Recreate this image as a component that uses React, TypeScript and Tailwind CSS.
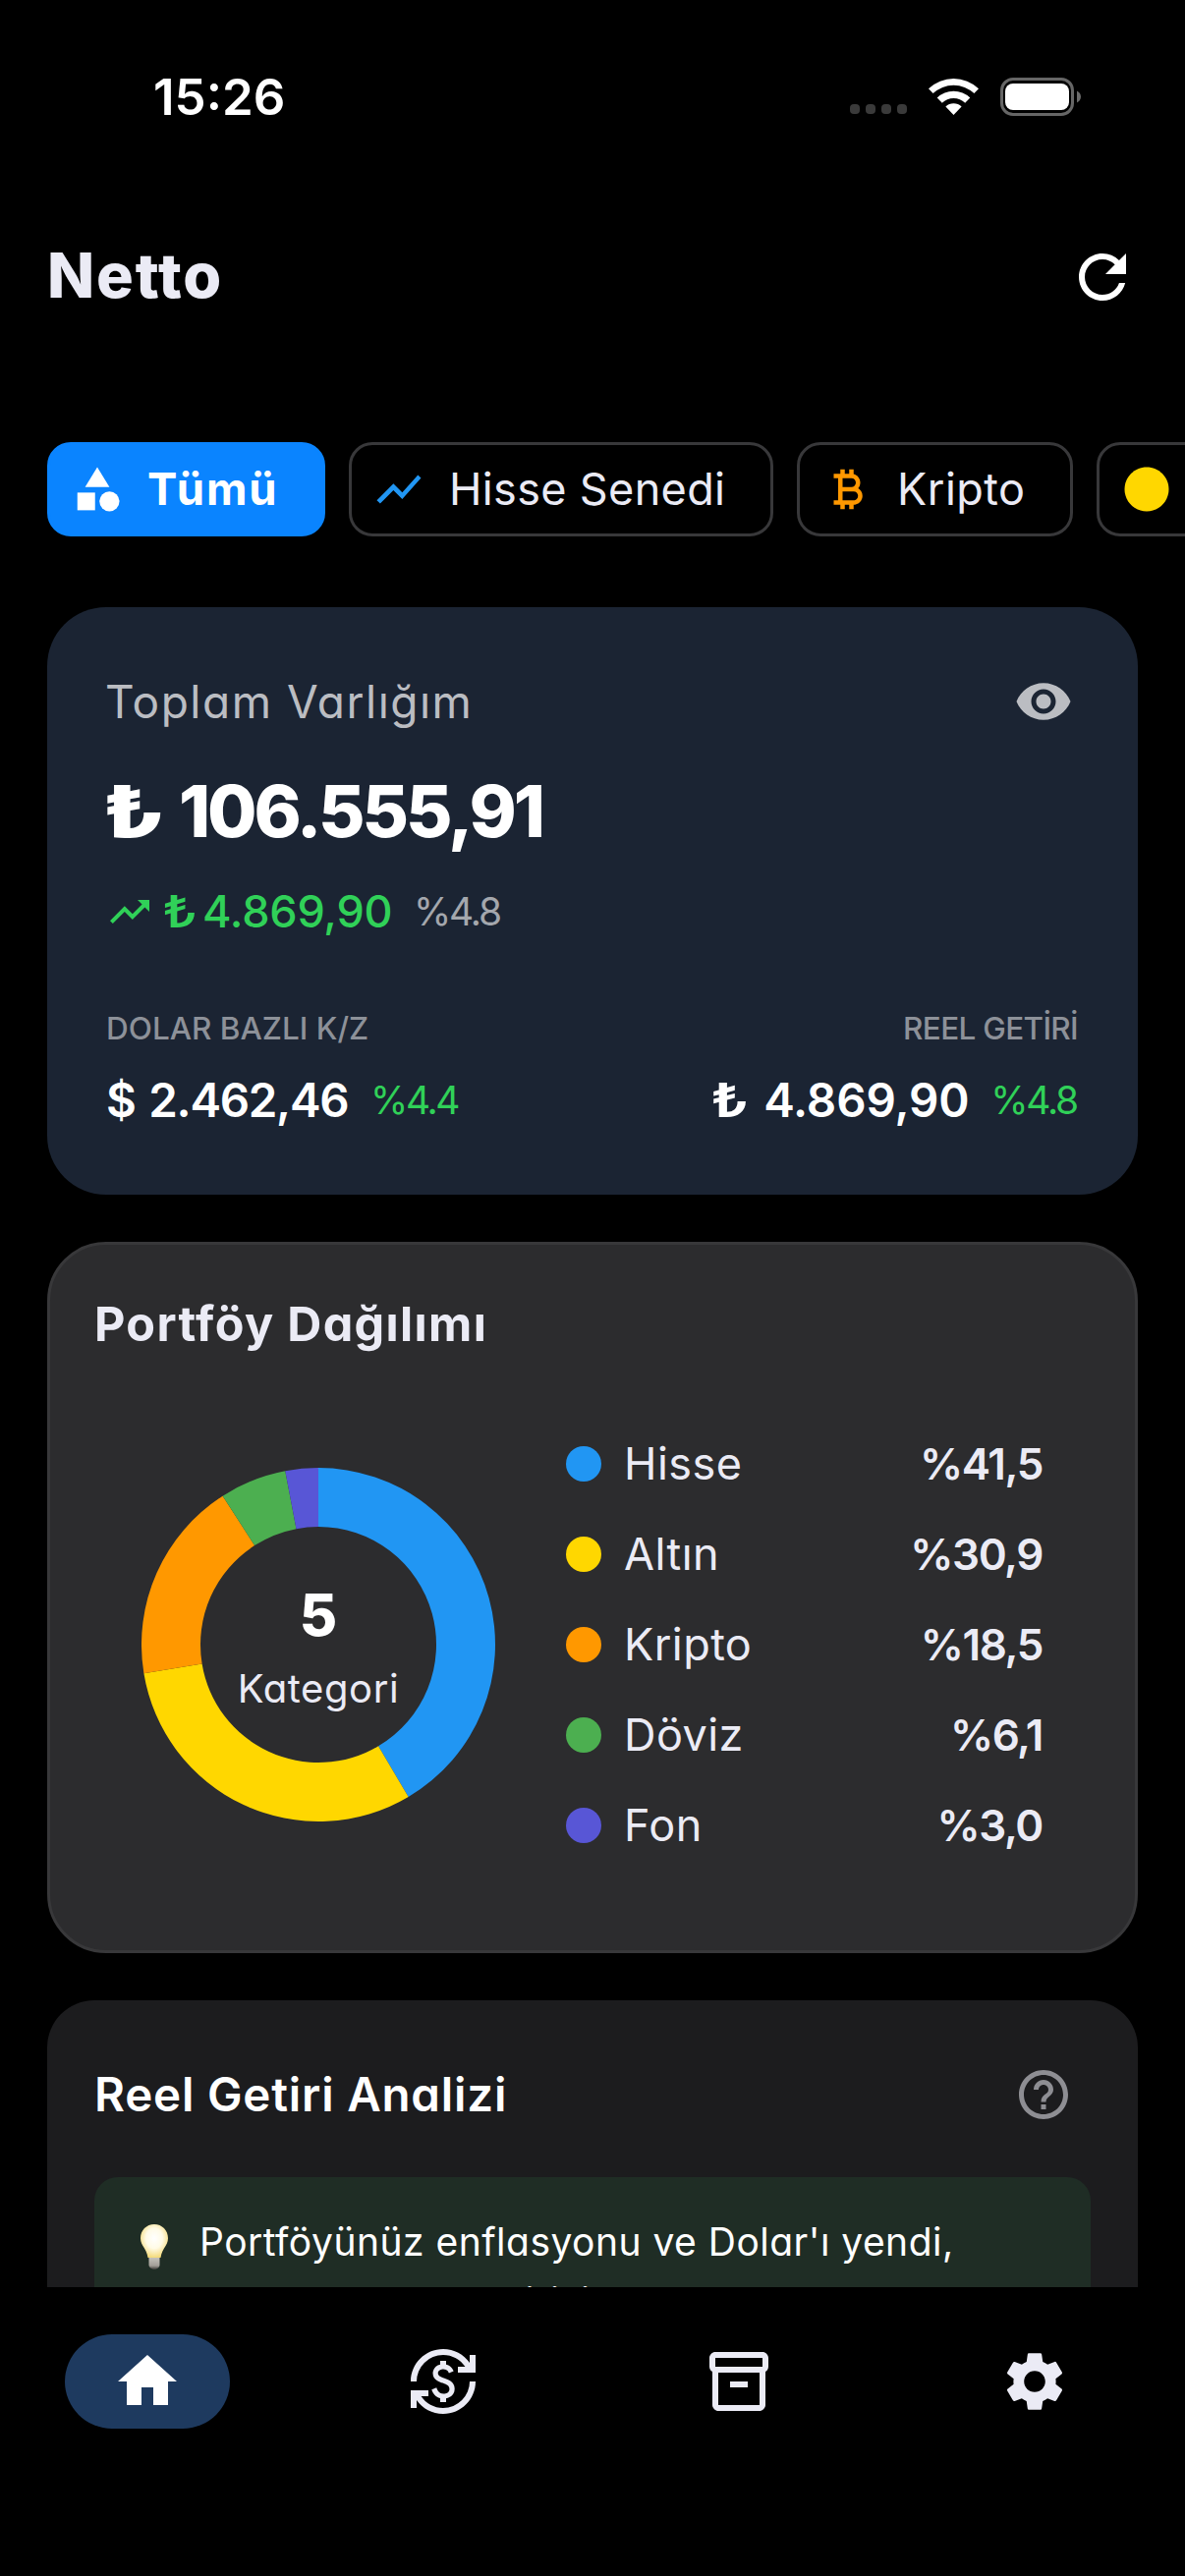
import React, { useState } from "react";
import type { IconType } from "react-icons";
import {
  MdCategory,
  MdCircle,
  MdCurrencyBitcoin,
  MdCurrencyExchange,
  MdHelpOutline,
  MdHome,
  MdOutlineInventory2,
  MdRefresh,
  MdSettings,
  MdShowChart,
  MdTrendingUp,
  MdVisibility,
} from "react-icons/md";
import clsx from "clsx";

interface Filter {
  label: string;
  icon: IconType;
  iconClass: string;
  width: string;
  text: string;
}

const filters: Filter[] = [
  { label: "Tümü", icon: MdCategory, iconClass: "text-white", width: "w-[283px]", text: "text-[45.5px] tracking-[1.8px]" },
  { label: "Hisse Senedi", icon: MdShowChart, iconClass: "text-[#2196f3]", width: "w-[432px]", text: "text-[45px] tracking-[0.35px]" },
  { label: "Kripto", icon: MdCurrencyBitcoin, iconClass: "text-[#ff9800]", width: "w-[281px]", text: "text-[45px] tracking-[0.5px]" },
  { label: "Altın", icon: MdCircle, iconClass: "text-[#ffd700]", width: "w-[250px]", text: "text-[45px] tracking-[0.5px]" },
];

interface Category {
  name: string;
  value: number;
  color: string;
  dot: string;
}

const categories: Category[] = [
  { name: "Hisse", value: 41.5, color: "#2196f3", dot: "bg-[#2196f3]" },
  { name: "Altın", value: 30.9, color: "#ffd700", dot: "bg-[#ffd700]" },
  { name: "Kripto", value: 18.5, color: "#ff9800", dot: "bg-[#ff9800]" },
  { name: "Döviz", value: 6.1, color: "#4caf50", dot: "bg-[#4caf50]" },
  { name: "Fon", value: 3.0, color: "#5856d6", dot: "bg-[#5856d6]" },
];

const navItems: IconType[] = [
  MdHome,
  MdCurrencyExchange,
  MdOutlineInventory2,
  MdSettings,
];

const formatPercent = (value: number): string =>
  `%${value.toFixed(1).replace(".", ",")}`;

const StatusBar: React.FC = () => (
  <div className="flex h-[196px] shrink-0 items-center justify-between pl-[156px] pr-[106px]">
    <span className="text-[51px] font-semibold leading-none text-white">
      15:26
    </span>
    <div className="flex items-center gap-[22px]">
      <div className="mt-[26px] flex gap-[6px]">
        {[0, 1, 2, 3].map((i) => (
          <span key={i} className="h-[10px] w-[10px] rounded-[4px] bg-[#3a3a3a]" />
        ))}
      </div>
      <svg width="51" height="37" viewBox="0 0 51 37" fill="#fff">
        <path d="M0 10.2A37 37 0 0 1 51 10.2L46.4 15.1A30.3 30.3 0 0 0 4.6 15.1Z" />
        <path d="M8.7 19.4A24.3 24.3 0 0 1 42.3 19.4L37.2 24.7A17 17 0 0 0 13.8 24.7Z" />
        <path d="M17.4 28.5A11.7 11.7 0 0 1 33.6 28.5L25.5 37Z" />
      </svg>
      <svg width="82" height="39" viewBox="0 0 82 39">
        <rect x="1.5" y="1.5" width="72" height="36" rx="11.5" fill="none" stroke="#666" strokeWidth="3" />
        <rect x="5" y="6" width="65" height="27" rx="8" fill="#fff" />
        <path d="M78 13.5C80.6 14.8 82 17 82 19.5S80.6 24.2 78 25.5Z" fill="#6b6b6b" />
      </svg>
    </div>
  </div>
);

const DonutChart: React.FC = () => {
  const total = categories.reduce((sum, c) => sum + c.value, 0);
  let start = 0;

  return (
    <div className="relative h-[360px] w-[360px]">
      <svg viewBox="-180 -180 360 360" className="h-full w-full">
        {categories.map((c) => {
          const a0 = (start / total) * Math.PI * 2;
          start += c.value;
          const a1 = (start / total) * Math.PI * 2;
          const point = (r: number, a: number) =>
            `${(r * Math.sin(a)).toFixed(2)} ${(-r * Math.cos(a)).toFixed(2)}`;
          return (
            <path
              key={c.name}
              fill={c.color}
              d={`M${point(180, a0)}A180 180 0 0 1 ${point(180, a1)}L${point(120, a1)}A120 120 0 0 0 ${point(120, a0)}Z`}
            />
          );
        })}
      </svg>
      <div className="absolute inset-0 flex flex-col items-center justify-center">
        <span className="text-[59px] font-extrabold leading-[90px] text-white">
          {categories.length}
        </span>
        <span className="text-[40px] leading-[60px] tracking-[0.6px]">
          Kategori
        </span>
      </div>
    </div>
  );
};

const LightBulb: React.FC = () => (
  <svg width="28" height="46" viewBox="0 0 28 46">
    <defs>
      <radialGradient id="glass" cx="0.5" cy="0.42" r="0.6">
        <stop offset="0" stopColor="#ffffff" />
        <stop offset="0.5" stopColor="#fffbe6" />
        <stop offset="1" stopColor="#f3d873" />
      </radialGradient>
      <linearGradient id="base" x1="0" y1="0" x2="0" y2="1">
        <stop offset="0" stopColor="#c9c6c0" />
        <stop offset="0.7" stopColor="#a39f98" />
        <stop offset="1" stopColor="#3a3a36" />
      </linearGradient>
    </defs>
    <path d="M8.5 33h11v8.5c0 1.8-2.5 4.5-5.5 4.5s-5.5-2.7-5.5-4.5z" fill="url(#base)" />
    <path d="M14 0c8 0 14 6.2 14 14.2 0 7.3-6.5 11-7.5 19.8h-13C6.500 25.2 0 21.5 0 14.2 0 6.2 6 0 14 0z" fill="url(#glass)" />
  </svg>
);

// The lira sign is drawn a little wider than the digits next to it
const Lira: React.FC = () => (
  <span className="inline-block origin-left scale-x-[1.32]">₺</span>
);

const SummaryCard: React.FC = () => {
  const [hidden, setHidden] = useState(false);
  const mask = (text: string) => (hidden ? "••••" : text);

  return (
    <section className="h-[598px] rounded-[60px] bg-[#1b2433] px-[60px] pt-[60px]">
      <div className="flex h-[72px] items-center justify-between">
        <h2 className="-ml-px text-[46px] tracking-[1.5px] text-[#bbbdc2]">
          Toplam Varlığım
        </h2>
        <button className="mr-[6px]" onClick={() => setHidden(!hidden)}>
          <MdVisibility className="h-[60px] w-[60px] text-[#bbbdc2]" />
        </button>
      </div>
      <div className="mt-[28px] flex h-[96px] items-center text-[73px] font-extrabold text-white">
        <span className="-ml-[4px] w-[78px] shrink-0">
          <Lira />
        </span>
        <span className="tracking-[-3.1px]">{mask("106.555,91")}</span>
      </div>
      <div className="mt-[18px] flex h-[72px] items-center text-[#30d158]">
        <MdTrendingUp className="h-[48px] w-[48px]" />
        <span className="ml-[9px] w-[41px] text-[45px] font-medium">
          <Lira />
        </span>
        <span className="w-[215px] text-[45px] font-medium tracking-[-0.2px]">
          {mask("4.869,90")}
        </span>
        <span className="text-[39px] tracking-[-2.2px] text-[#a4a7ad]">
          %4.8
        </span>
      </div>
      <div className="mt-[60px] flex h-[46px] items-center justify-between text-[31.5px] font-medium text-[#8d9199]">
        <span>DOLAR BAZLI K/Z</span>
        <span className="mr-px tracking-[-0.67px]">REEL GETİRİ</span>
      </div>
      <div className="mt-[15px] flex h-[70px] items-center justify-between">
        <div className="flex items-center">
          <span className="w-[269px] text-[47.5px] font-semibold tracking-[-1.3px] text-white [word-spacing:3px]">
            {mask("$ 2.462,46")}
          </span>
          <span className="text-[39px] tracking-[-2.4px] text-[#30d158]">
            %4.4
          </span>
        </div>
        <div className="mr-[2px] flex items-center">
          <span className="w-[54px] text-[47.5px] font-semibold text-white">
            <Lira />
          </span>
          <span className="w-[231px] text-[47.5px] font-semibold tracking-[-0.1px] text-white">
            {mask("4.869,90")}
          </span>
          <span className="text-[39px] tracking-[-2.2px] text-[#30d158]">
            %4.8
          </span>
        </div>
      </div>
    </section>
  );
};

const DistributionCard: React.FC = () => (
  <section className="mt-[48px] h-[724px] rounded-[60px] border-[3px] border-[#38383a] bg-[#2c2c2e] px-[45px] pt-[45px]">
    <h2 className="text-[48.5px] font-bold leading-[72px] tracking-[1.35px]">
      Portföy Dağılımı
    </h2>
    <div className="ml-[48px] mt-[60px] flex items-center">
      <DonutChart />
      <ul className="ml-[72px] w-[485px]">
        {categories.map((c) => (
          <li key={c.name} className="flex h-[92px] items-center text-[45px]">
            <span className={clsx("h-[36px] w-[36px] rounded-full", c.dot)} />
            <span className="ml-[23px] flex-1 tracking-[0.45px]">{c.name}</span>
            <span className="text-[44px] font-semibold tracking-[-1.4px]">
              {formatPercent(c.value)}
            </span>
          </li>
        ))}
      </ul>
    </div>
  </section>
);

const RealReturnCard: React.FC = () => (
  <section className="mt-[48px] rounded-[48px] bg-[#1c1c1e] px-[48px] pb-[48px] pt-[48px] text-white">
    <div className="flex h-[96px] items-center justify-between">
      <h2 className="text-[47.5px] font-semibold tracking-[0.8px]">
        Reel Getiri Analizi
      </h2>
      <MdHelpOutline className="mr-[18px] h-[60px] w-[60px] text-[#8e8e93]" />
    </div>
    <div className="mt-[36px] flex items-start rounded-[24px] bg-[#1f2d25] pb-[36px] pl-[47px] pr-[36px] pt-[35px]">
      <div className="mt-[13px] shrink-0">
        <LightBulb />
      </div>
      <p className="ml-[32px] text-[39px] leading-[61px] tracking-[0.48px]">
        Portföyünüz enflasyonu ve Dolar'ı yendi,
        <br />
        paranızın reel getirisi arttı.
      </p>
    </div>
  </section>
);

const BottomNav: React.FC = () => {
  const [active, setActive] = useState(0);

  return (
    <nav className="grid h-[294px] shrink-0 grid-cols-4 bg-black pr-[3px] pt-[48px]">
      {navItems.map((Icon, index) => (
        <button
          key={index}
          onClick={() => setActive(index)}
          className={clsx(
            "flex h-[96px] w-[168px] items-center justify-center justify-self-center rounded-full",
            index === active ? "bg-[#1e3a5f] text-white" : "text-[#ebebf5]"
          )}
        >
          <Icon className="h-[72px] w-[72px]" />
        </button>
      ))}
    </nav>
  );
};

const App: React.FC = () => {
  const [selected, setSelected] = useState("Tümü");

  return (
    <div className="flex h-[2622px] w-[1206px] flex-col overflow-hidden bg-black font-['Inter',sans-serif] text-[#ebebf5] [font-feature-settings:'cv11']">
      <StatusBar />
      <header className="flex h-[172px] shrink-0 items-center justify-between px-[48px]">
        <h1 className="-mt-[3px] text-[63px] font-extrabold tracking-[1.8px]">
          Netto
        </h1>
        <MdRefresh className="h-[72px] w-[72px] text-white" />
      </header>
      <main className="min-h-0 flex-1 overflow-hidden pt-[82px]">
        <div className="flex gap-[24px] pl-[48px]">
          {filters.map(({ label, icon: Icon, iconClass, width, text }) => (
            <button
              key={label}
              onClick={() => setSelected(label)}
              className={clsx(
                "flex h-[96px] shrink-0 items-center gap-[24px] whitespace-nowrap rounded-[24px] border-[3px] pl-[21px]",
                width,
                text,
                label === selected
                  ? "border-[#0a84ff] bg-[#0a84ff] font-bold text-white"
                  : "border-[#38383a]"
              )}
            >
              <Icon className={clsx("h-[54px] w-[54px] shrink-0", iconClass)} />
              {label}
            </button>
          ))}
        </div>
        <div className="px-[48px] pt-[72px]">
          <SummaryCard />
          <DistributionCard />
          <RealReturnCard />
        </div>
      </main>
      <BottomNav />
    </div>
  );
};

export default App;
